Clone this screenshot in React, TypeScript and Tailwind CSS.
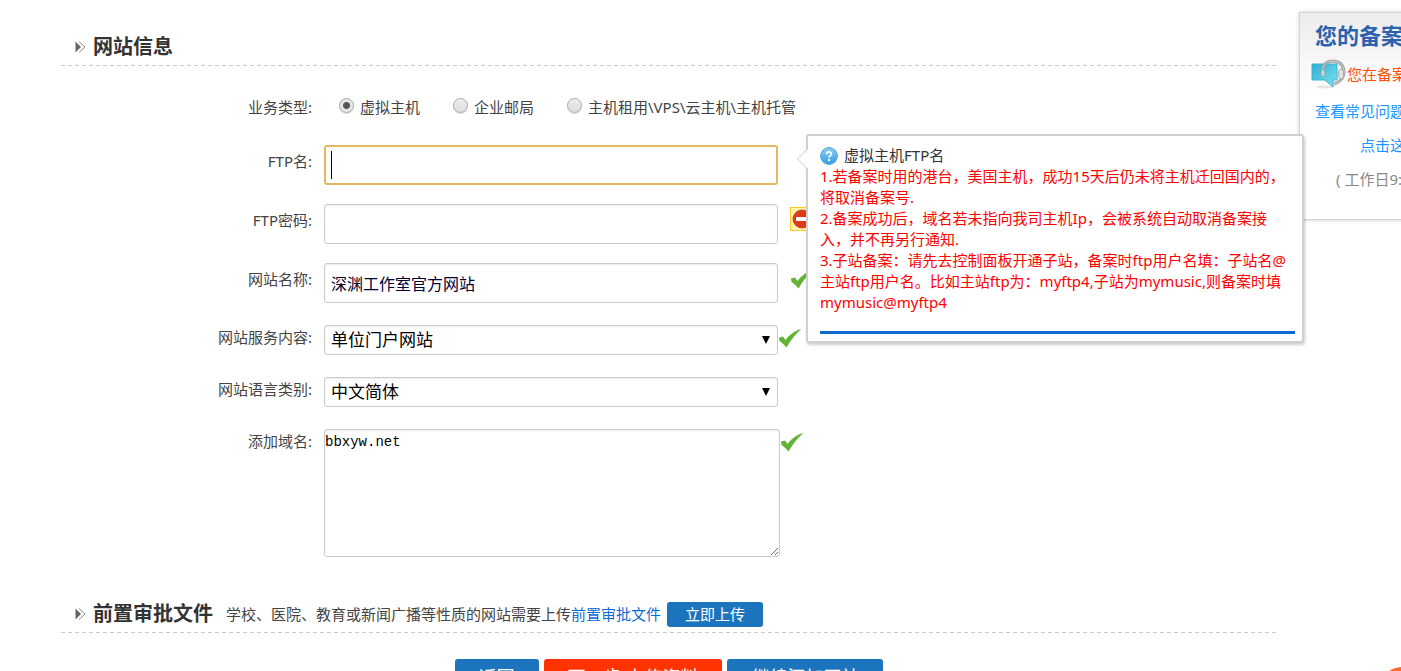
// libs
import type { ReactNode } from "react";

const fieldBox =
  "w-full rounded-[3px] border border-[#ccc] bg-white shadow-[inset_0_1px_2px_rgba(0,0,0,0.08)]";

const serviceTypes = ["虚拟主机", "企业邮局", "主机租用\\VPS\\云主机\\主机托管"];

const DashedLine = () => (
  <div className="h-px bg-[repeating-linear-gradient(90deg,#ccc_0_4px,transparent_4px_7px)]" />
);

const ArrowIcon = () => (
  <svg className="h-3 w-3 shrink-0" viewBox="0 0 12 12" aria-hidden="true">
    <path d="M0.500 0.500v11l5.500-5.500z" fill="#666" />
    <path d="M4 0.500l6 5.500-6 5.500" fill="none" stroke="#888" />
  </svg>
);

const CheckIcon = () => (
  <svg className="h-5 w-6 shrink-0" viewBox="0 0 24 20" aria-hidden="true">
    <path
      d="M1 9.500l4-1 2.500 3.500C11 7.500 16 3 23.500.800 17.500 6 12.500 12.500 8.500 19.500 6.500 17 4 14.500 1.500 13z"
      fill="#62b336"
    />
  </svg>
);

const StopIcon = () => (
  <svg className="h-6 w-6 shrink-0" viewBox="0 0 24 24" aria-hidden="true">
    <rect x="0.500" y="0.500" width="23" height="23" fill="#fff3b0" stroke="#ffc926" />
    <circle cx="12" cy="12" r="9" fill="#dc3b1c" stroke="#c9482a" />
    <rect x="6" y="10" width="12" height="4" rx="1" fill="#fff" />
  </svg>
);

const HelpIcon = () => (
  <svg className="h-[18px] w-[18px] shrink-0" viewBox="0 0 18 18" aria-hidden="true">
    <defs>
      <linearGradient id="help" x1="0" y1="0" x2="0" y2="1">
        <stop offset="0" stopColor="#8fd0f5" />
        <stop offset="1" stopColor="#2f9fe0" />
      </linearGradient>
    </defs>
    <circle cx="9" cy="9" r="8.400" fill="url(#help)" stroke="#4da3d8" />
    <path
      d="M6.600 7.200c0-3 4.800-3 4.800-.2 0 1.700-2.400 1.700-2.400 3.400"
      fill="none"
      stroke="#fff"
      strokeWidth="1.800"
    />
    <circle cx="9" cy="13" r="1.200" fill="#fff" />
  </svg>
);

const ServiceIcon = () => (
  <svg className="h-[30px] w-[35px] shrink-0" viewBox="0 0 35 30" aria-hidden="true">
    <defs>
      <linearGradient id="bubble" x1="0" y1="0" x2="1" y2="1">
        <stop offset="0" stopColor="#2fb0d6" />
        <stop offset="1" stopColor="#7de2ee" />
      </linearGradient>
    </defs>
    <ellipse cx="14" cy="28" rx="9" ry="1.500" fill="#e4e4e4" />
    <path
      d="M1 5h25v16h-4v7l-8-7H1z"
      fill="url(#bubble)"
      stroke="#3fb4cf"
    />
    <path
      d="M11 13C12 5 16 2 22 2c7 0 11 5 11 11 0 6-4 10-10 12"
      fill="none"
      stroke="#9a9e9f"
      strokeWidth="3"
    />
    <path
      d="M11 13C12 5 16 2 22 2c7 0 11 5 11 11 0 6-4 10-10 12"
      fill="none"
      stroke="#d5d8d8"
    />
    <ellipse cx="12" cy="14" rx="2" ry="3.500" fill="#c9dfe2" stroke="#8fa3a6" />
    <ellipse cx="30" cy="15" rx="2.500" ry="5" fill="#e2e4e4" stroke="#a5a8a8" />
  </svg>
);

interface SectionHeaderProps {
  title: string;
  children?: ReactNode;
}

const SectionHeader = ({ title, children }: SectionHeaderProps) => (
  <header>
    <div className="flex h-[39px] items-center pt-[3px] pl-[14px]">
      <ArrowIcon />
      <h2 className="ml-1.5 text-[20px] font-bold text-[#333]">{title}</h2>
      {children}
    </div>
    <DashedLine />
  </header>
);

interface FieldProps {
  id: string;
  label: string;
  labelClass?: string;
  controlClass?: string;
  status?: ReactNode;
  children: ReactNode;
}

const Field = ({
  id,
  label,
  labelClass = "",
  controlClass = "w-[454px]",
  status,
  children,
}: FieldProps) => (
  <div className="flex items-start">
    <label
      htmlFor={id}
      className={`w-[251px] shrink-0 text-right leading-6 ${labelClass}`}
    >
      {label}
    </label>
    <div className={`relative ml-3 shrink-0 ${controlClass}`}>{children}</div>
    {status}
  </div>
);

interface SelectFieldProps {
  id: string;
  value: string;
}

const SelectField = ({ id, value }: SelectFieldProps) => (
  <>
    <select
      id={id}
      className={`${fieldBox} block h-[30px] appearance-none pl-[6px] text-[17px] leading-6 text-black`}
    >
      <option>{value}</option>
    </select>
    <svg
      className="pointer-events-none absolute top-[11px] right-2 h-2 w-2"
      viewBox="0 0 8 8"
      aria-hidden="true"
    >
      <path d="M0 0h8L4 8z" fill="#000" />
    </svg>
  </>
);

const FtpTip = () => (
  <div className="absolute top-[-11px] left-[482px] z-20 w-[498px] rounded-[3px] border-2 border-[#d0d0d0] bg-white pt-[9px] pr-[7px] pb-[7px] pl-3 leading-[21px] whitespace-nowrap text-[#f00] shadow-[1px_2px_3px_rgba(0,0,0,0.2)]">
    <svg
      className="absolute top-3 left-[-12px] h-[22px] w-3"
      viewBox="0 0 12 22"
      aria-hidden="true"
    >
      <path d="M12 1L1.500 11 12 21z" fill="#fff" />
      <path d="M11 1.500L1.500 11l9.500 9.500" fill="none" stroke="#ccc" />
    </svg>
    <p className="flex items-center gap-1.5 text-[#333]">
      <HelpIcon />
      虚拟主机FTP名
    </p>
    <p>
      1.若备案时用的港台，美国主机，成功15天后仍未将主机迁回国内的，
      <br />
      将取消备案号.
      <br />
      2.备案成功后，域名若未指向我司主机Ip，会被系统自动取消备案接
      <br />
      入，并不再另行通知.
      <br />
      3.子站备案：请先去控制面板开通子站，备案时ftp用户名填：子站名@
      <br />
      主站ftp用户名。比如主站ftp为：myftp4,子站为mymusic,则备案时填
      <br />
      mymusic@myftp4
    </p>
    <div className="mt-[18px] border-b-[3px] border-[#0a6cce]" />
  </div>
);

const SidePanel = () => (
  <aside className="absolute top-3 left-[1299px] z-10 h-[208px] w-[220px] border border-[#d4d4d4] bg-gradient-to-b from-[#ececec] to-white to-40% pl-[15px] whitespace-nowrap shadow-[0_0_4px_rgba(0,0,0,0.2)]">
    <h3 className="mt-2 text-[22px] leading-7 font-bold text-[#2b62ae]">
      您的备案专员
    </h3>
    <p className="mt-2 -ml-1 flex h-[34px] items-center gap-px text-[#ff4e00]">
      <ServiceIcon />
      您在备案中
    </p>
    <p className="mt-[3px] leading-[34px]">
      <a href="#" className="text-[#1a96ff]">
        查看常见问题
      </a>
    </p>
    <p className="pl-[45px] leading-[34px]">
      <a href="#" className="text-[#1a96ff]">
        点击这里
      </a>
    </p>
    <p className="pl-[21px] leading-[34px] text-[#888]">( 工作日9:00</p>
  </aside>
);

const App = () => {
  return (
    <div className="relative h-screen overflow-hidden bg-white font-['Noto_Sans','Noto_Sans_CJK_SC',sans-serif] text-[15px] text-[#444]">
      <main className="mr-[124px] ml-[61px] pt-[26px]">
        <SectionHeader title="网站信息" />

        <form>
          <div
            role="radiogroup"
            aria-labelledby="serviceTypeLabel"
            className="mt-[29px] flex h-6 items-center"
          >
            <span id="serviceTypeLabel" className="w-[251px] text-right">
              业务类型:
            </span>
            <div className="ml-[27px] flex gap-[33px]">
              {serviceTypes.map((type, index) => (
                <label key={type} className="flex items-center gap-1.5">
                  <input
                    type="radio"
                    name="serviceType"
                    defaultChecked={index === 0}
                    className="mb-1 h-[15px] w-[15px] appearance-none rounded-full border border-[#aaa] bg-gradient-to-b from-[#eee] to-[#ddd] shadow-[0_1px_1px_rgba(0,0,0,0.15)] checked:bg-[radial-gradient(circle,#555_0_3px,#e6e6e6_4px)]"
                  />
                  {type}
                </label>
              ))}
            </div>
          </div>

          <div className="mt-[26px] flex flex-col gap-[19px]">
            <Field id="ftpName" label="FTP名:" labelClass="pt-1">
              <input
                id="ftpName"
                type="text"
                className="block h-10 w-full rounded-[3px] border-2 border-[#e5b85f] px-[5px] text-[16px] text-[#003] outline-none"
              />
              <span className="pointer-events-none absolute top-1.5 left-[7px] h-7 w-px bg-[#003]" />
              <FtpTip />
            </Field>
            <Field
              id="ftpPassword"
              label="FTP密码:"
              labelClass="pt-1"
              status={
                <span className="mt-[3px] ml-3">
                  <StopIcon />
                </span>
              }
            >
              <input
                id="ftpPassword"
                type="password"
                className={`${fieldBox} block h-10 px-[6px] text-[16px]`}
              />
            </Field>
            <Field
              id="siteName"
              label="网站名称:"
              labelClass="pt-1"
              status={
                <span className="mt-1.5 ml-3">
                  <CheckIcon />
                </span>
              }
            >
              <input
                id="siteName"
                type="text"
                defaultValue="深渊工作室官方网站"
                className={`${fieldBox} block h-10 px-[6px] text-[16px] text-[#003]`}
              />
            </Field>
          </div>

          <div className="mt-[22px] flex flex-col gap-[22px]">
            <Field
              id="content"
              label="网站服务内容:"
              status={
                <span className="mt-[3px]">
                  <CheckIcon />
                </span>
              }
            >
              <SelectField id="content" value="单位门户网站" />
            </Field>
            <Field id="language" label="网站语言类别:">
              <SelectField id="language" value="中文简体" />
            </Field>
            <Field
              id="domains"
              label="添加域名:"
              controlClass="w-[456px]"
              status={
                <span className="mt-[3px]">
                  <CheckIcon />
                </span>
              }
            >
              <textarea
                id="domains"
                defaultValue="bbxyw.net"
                className={`${fieldBox} block h-32 resize font-['Liberation_Mono',monospace] text-[14px] leading-6 text-black`}
              />
            </Field>
          </div>
        </form>

        <div className="mt-9">
          <SectionHeader title="前置审批文件">
            <p className="ml-[13px]">
              学校、医院、教育或新闻广播等性质的网站需要上传
              <a href="#" className="text-[#0a6cd6]">
                前置审批文件
              </a>
            </p>
            <button
              type="button"
              className="ml-1.5 h-[25px] rounded-[3px] bg-[#1c75bc] px-[18px] text-white"
            >
              立即上传
            </button>
          </SectionHeader>
        </div>

        <div className="mt-[26px] flex justify-center gap-[5px] text-[18px] text-white">
          <button type="button" className="h-9 rounded-[3px] bg-[#1c75bc] px-6">
            返回
          </button>
          <button type="button" className="h-9 rounded-[3px] bg-[#ff3300] px-6">
            下一步:上传资料
          </button>
          <button type="button" className="h-9 rounded-[3px] bg-[#1c75bc] px-6">
            继续添加网站
          </button>
        </div>
      </main>

      <SidePanel />

      {/* tip of the floating service badge */}
      <svg
        className="absolute right-0 bottom-0 h-1 w-3"
        viewBox="0 0 12 4"
        aria-hidden="true"
      >
        <path d="M0 4C3 1.500 8 .500 12 0v4z" fill="#ff6a33" />
      </svg>
    </div>
  );
};

export default App;
